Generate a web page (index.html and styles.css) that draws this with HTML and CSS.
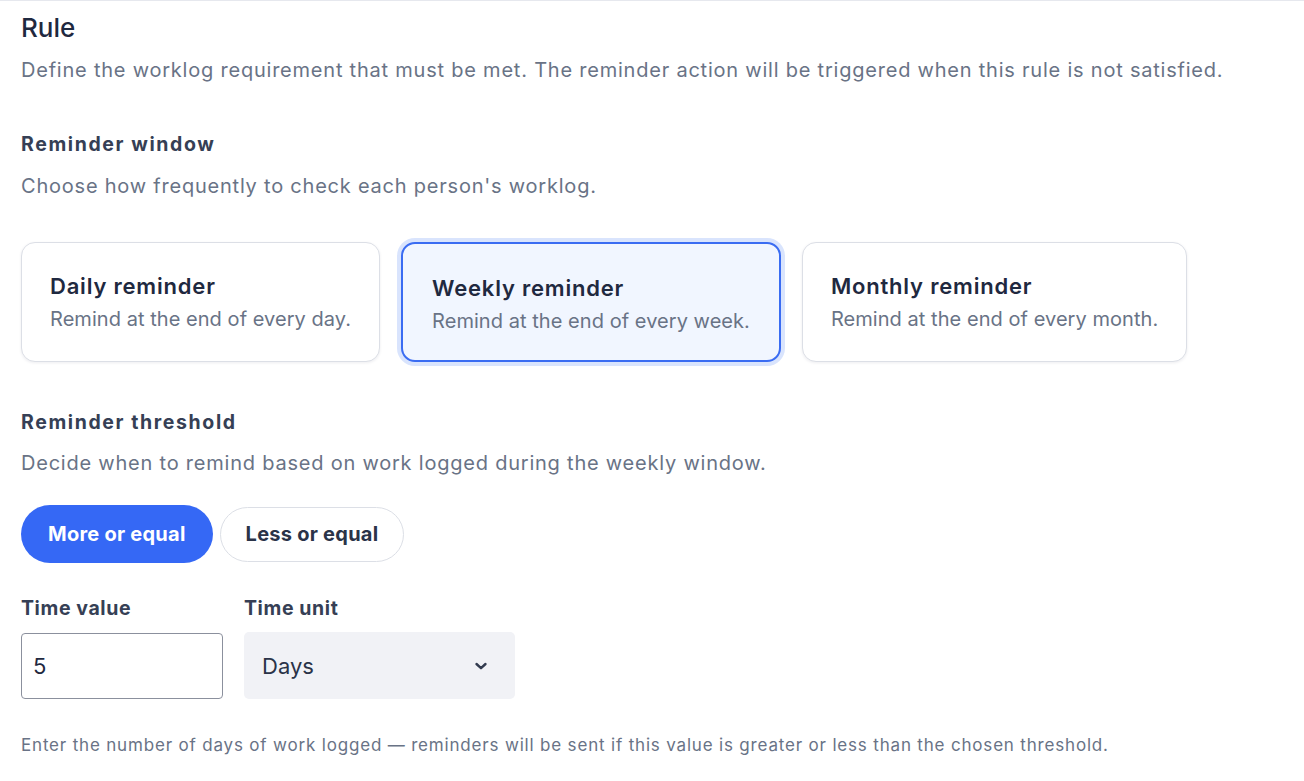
FILE: index.html
```html
<!DOCTYPE html>
<html lang="en">
<head>
<meta charset="utf-8">
<title>Rule</title>
<link rel="stylesheet" href="styles.css">
</head>
<body>
<main class="page">
  <h1 class="title">Rule</h1>
  <p class="desc">Define the worklog requirement that must be met. The reminder action will be triggered when this rule is not satisfied.</p>

  <h2 class="label label-window">Reminder window</h2>
  <p class="desc desc-window">Choose how frequently to check each person's worklog.</p>

  <div class="cards">
    <div class="card">
      <div class="card-title">Daily reminder</div>
      <div class="card-sub">Remind at the end of every day.</div>
    </div>
    <div class="card card-selected">
      <div class="card-title">Weekly reminder</div>
      <div class="card-sub">Remind at the end of every week.</div>
    </div>
    <div class="card">
      <div class="card-title">Monthly reminder</div>
      <div class="card-sub">Remind at the end of every month.</div>
    </div>
  </div>

  <h2 class="label label-threshold">Reminder threshold</h2>
  <p class="desc desc-threshold">Decide when to remind based on work logged during the weekly window.</p>

  <div class="toggles">
    <button class="pill pill-active">More or equal</button>
    <button class="pill">Less or equal</button>
  </div>

  <div class="fields">
    <div class="field">
      <label class="field-label">Time value</label>
      <div class="input">5</div>
    </div>
    <div class="field">
      <label class="field-label">Time unit</label>
      <div class="select">
        <span>Days</span>
        <svg class="chev" width="14" height="10" viewBox="0 0 14 10"><path d="M2.5 3 L7 7.2 L11.5 3" fill="none" stroke="#333b4f" stroke-width="2.4" stroke-linecap="round" stroke-linejoin="round"/></svg>
      </div>
    </div>
  </div>

  <p class="helper">Enter the number of days of work logged — reminders will be sent if this value is greater or less than the chosen threshold.</p>
</main>
</body>
</html>
```
FILE: styles.css
```css
* { box-sizing: border-box; }
html, body { margin: 0; padding: 0; background: #fff; }
body {
  font-family: Inter, "Noto Sans", "Liberation Sans", sans-serif;
  color: #1f2940;
  border-top: 1px solid #e6e8ee;
}
.page { padding: 0 21px; }
.title {
  margin: 11px 0 0;
  font-size: 26px;
  line-height: 32px;
  font-weight: 500;
  color: #1f2940;
}
.desc {
  margin: 12px 0 0;
  font-size: 20px;
  line-height: 28px;
  letter-spacing: 0.78px;
  color: #697386;
}
.label {
  margin: 0;
  font-size: 19.5px;
  line-height: 26px;
  font-weight: 700;
  letter-spacing: 1.6px;
  color: #363f55;
}
.label-window { margin-top: 47px; }
.label-threshold { margin-top: 47px; }
.desc-window { margin-top: 15px; }
.desc-threshold { margin-top: 14px; }

.cards {
  display: flex;
  gap: 21px;
  margin-top: 42px;
  align-items: stretch;
}
.card {
  height: 120px;
  display: flex;
  flex-direction: column;
  justify-content: center;
  gap: 6px;
  padding: 0 28px;
  border: 1px solid #dcdfe6;
  border-radius: 14px;
  background: #fff;
  box-shadow: 0 1px 3px rgba(20, 30, 60, 0.08);
}
.card-selected {
  padding: 3px 29px 0;
  border: 2.5px solid #3a6cf2;
  background: #f1f6ff;
  box-shadow: 0 0 0 4px #d9e4fd;
}
.card-title {
  font-size: 22px;
  line-height: 28px;
  font-weight: 600;
  letter-spacing: 0.8px;
  color: #1f2940;
}
.card-sub {
  font-size: 20px;
  line-height: 26px;
  letter-spacing: 0.05px;
  color: #697386;
}

.toggles {
  display: flex;
  align-items: center;
  gap: 7px;
  margin-top: 28px;
}
.pill {
  font-family: inherit;
  font-size: 20px;
  font-weight: 700;
  letter-spacing: 0.25px;
  border-radius: 999px;
  cursor: pointer;
  height: 55px;
  padding: 0 25px;
  border: 1px solid #dcdfe6;
  background: #fff;
  color: #2a3348;
}
.pill.pill-active {
  height: 58px;
  padding: 0 27px;
  border: none;
  background: #3568f5;
  color: #fff;
}

.fields {
  display: flex;
  gap: 21px;
  margin-top: 32px;
}
.field { display: flex; flex-direction: column; }
.field-label {
  font-size: 19.5px;
  line-height: 26px;
  font-weight: 700;
  letter-spacing: 0.6px;
  color: #363f55;
}
.input {
  margin-top: 12px;
  width: 202px;
  height: 66px;
  border: 1.5px solid #8b909d;
  border-radius: 4px;
  padding: 0 11px;
  display: flex;
  align-items: center;
  font-size: 22px;
  color: #1f2940;
}
.select {
  margin-top: 11px;
  width: 271px;
  height: 67px;
  border-radius: 5px;
  background: #f1f2f6;
  padding: 0 27px 0 18px;
  display: flex;
  align-items: center;
  justify-content: space-between;
  font-size: 22px;
  color: #2a3348;
}
.chev { display: block; }
.helper {
  margin: 34px 0 0;
  font-size: 17px;
  line-height: 24px;
  letter-spacing: 0.82px;
  color: #697386;
}
```
